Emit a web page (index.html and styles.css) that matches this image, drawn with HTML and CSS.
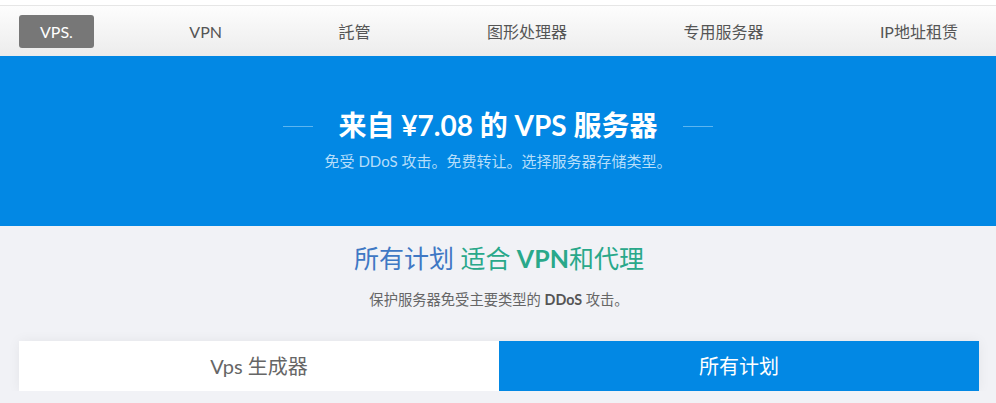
FILE: index.html
```html
<!DOCTYPE html>
<html lang="zh">
<head>
<meta charset="utf-8">
<title>VPS</title>
<link rel="stylesheet" href="styles.css">
</head>
<body>
<div class="topstrip"></div>
<nav class="nav">
  <a class="nav-item active">VPS.</a>
  <a class="nav-item">VPN</a>
  <a class="nav-item">託管</a>
  <a class="nav-item">图形处理器</a>
  <a class="nav-item">专用服务器</a>
  <a class="nav-item">IP地址租赁</a>
</nav>
<header class="hero">
  <div class="hero-title">
    <span class="rule"></span>
    <h1>来自 ¥7.08 的 VPS 服务器</h1>
    <span class="rule"></span>
  </div>
  <p class="hero-sub">免受 DDoS 攻击。免费转让。选择服务器存储类型。</p>
</header>
<section class="plans">
  <h2 class="plans-title"><span class="blue">所有计划</span> <span class="teal">适合 <b>VPN</b>和代理</span></h2>
  <p class="plans-sub">保护服务器免受主要类型的 <b>DDoS</b> 攻击。</p>
  <div class="tabs">
    <div class="tab">Vps 生成器</div>
    <div class="tab tab-active">所有计划</div>
  </div>
</section>
</body>
</html>
```
FILE: styles.css
```css
html, body {
  margin: 0;
  padding: 0;
}
body {
  background: #f1f2f6;
  font-family: "Lato", "Noto Sans CJK SC", sans-serif;
  color: #555;
}
.topstrip {
  height: 5px;
  background: #fff;
  border-bottom: 1px solid #e6e6e6;
}
.nav {
  height: 50px;
  display: flex;
  justify-content: space-between;
  align-items: center;
  padding: 0 17px 0 19px;
  background: linear-gradient(#fdfdfd, #ececec);
}
.nav-item {
  display: block;
  padding: 0 21px;
  height: 33px;
  line-height: 33px;
  font-size: 16px;
  color: #555;
  border-radius: 3px;
}
.nav-item.active {
  background: #777;
  color: #fff;
}
.hero {
  background: #0288e4;
  height: 170px;
  box-sizing: border-box;
  padding-top: 50px;
  text-align: center;
}
.hero-title {
  display: flex;
  justify-content: center;
  align-items: center;
  gap: 26px;
}
.hero-title h1 {
  margin: 0;
  font-size: 28px;
  font-weight: 700;
  color: #fff;
  line-height: 38px;
}
.rule {
  width: 30px;
  height: 1px;
  background: #5cb5f0;
  margin-top: 2px;
}
.hero-sub {
  margin: 6px 0 0;
  font-size: 15px;
  line-height: 22px;
  color: #b6defa;
}
.plans {
  text-align: center;
  padding: 14px 17px 0 19px;
}
.plans-title {
  margin: 0;
  font-size: 25px;
  font-weight: 400;
  line-height: 36px;
}
.blue { color: #3f78c4; }
.teal { color: #29a88a; }
.teal b { font-weight: 700; }
.plans-sub {
  margin: 14px 0 0;
  font-size: 14.3px;
  color: #666;
  line-height: 20px;
}
.plans-sub b { color: #555; }
.tabs {
  margin-top: 31px;
  display: grid;
  grid-template-columns: 1fr 1fr;
  box-shadow: 0 0 12px rgba(0,0,0,0.06);
}
.tab {
  height: 50px;
  line-height: 50px;
  font-size: 20px;
  background: #fff;
  color: #666;
}
.tab-active {
  background: #0288e4;
  color: #fff;
}
```
